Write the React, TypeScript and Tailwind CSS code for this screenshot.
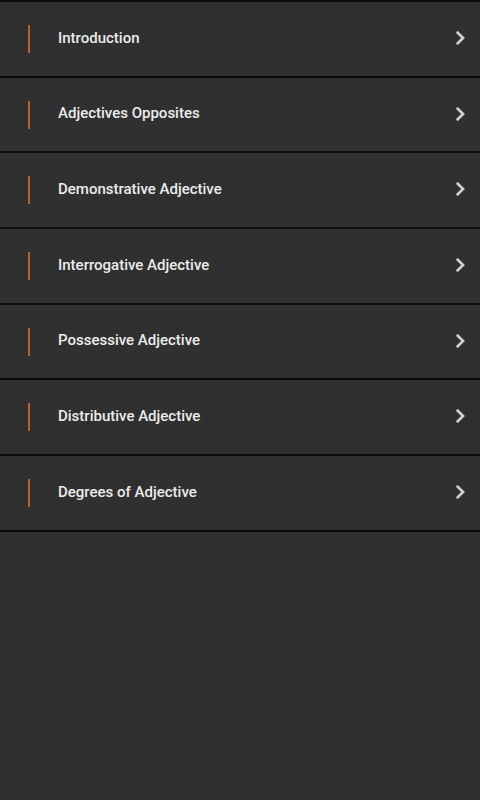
const topics = [
  "Introduction",
  "Adjectives Opposites",
  "Demonstrative Adjective",
  "Interrogative Adjective",
  "Possessive Adjective",
  "Distributive Adjective",
  "Degrees of Adjective",
];

function Chevron() {
  return (
    <svg width="28" height="28" viewBox="0 0 24 24" className="shrink-0">
      <path
        d="M8.59 16.59 13.17 12 8.59 7.41 10 6l6 6-6 6z"
        fill="#d4d4d4"
        stroke="#d4d4d4"
        strokeWidth="0.3"
      />
    </svg>
  );
}

export default function App() {
  return (
    <div
      className="w-[480px] h-[800px] bg-[#303030] border-t-2 border-[#0c0c0c]"
      style={{ fontFamily: "Roboto, 'Noto Sans', sans-serif" }}
    >
      {topics.map((t) => (
        <div
          key={t}
          className="h-[75.7px] flex items-center border-b-2 border-[#0c0c0c] pl-[28px] pr-[6px] pb-[2px]"
        >
          {/* accent bar */}
          <div className="w-[2px] h-[28px] bg-[#b8612a] translate-y-[1px]" />
          <span className="ml-[28px] flex-1 text-[15px] font-medium text-[#ececec]">
            {t}
          </span>
          <Chevron />
        </div>
      ))}
    </div>
  );
}
